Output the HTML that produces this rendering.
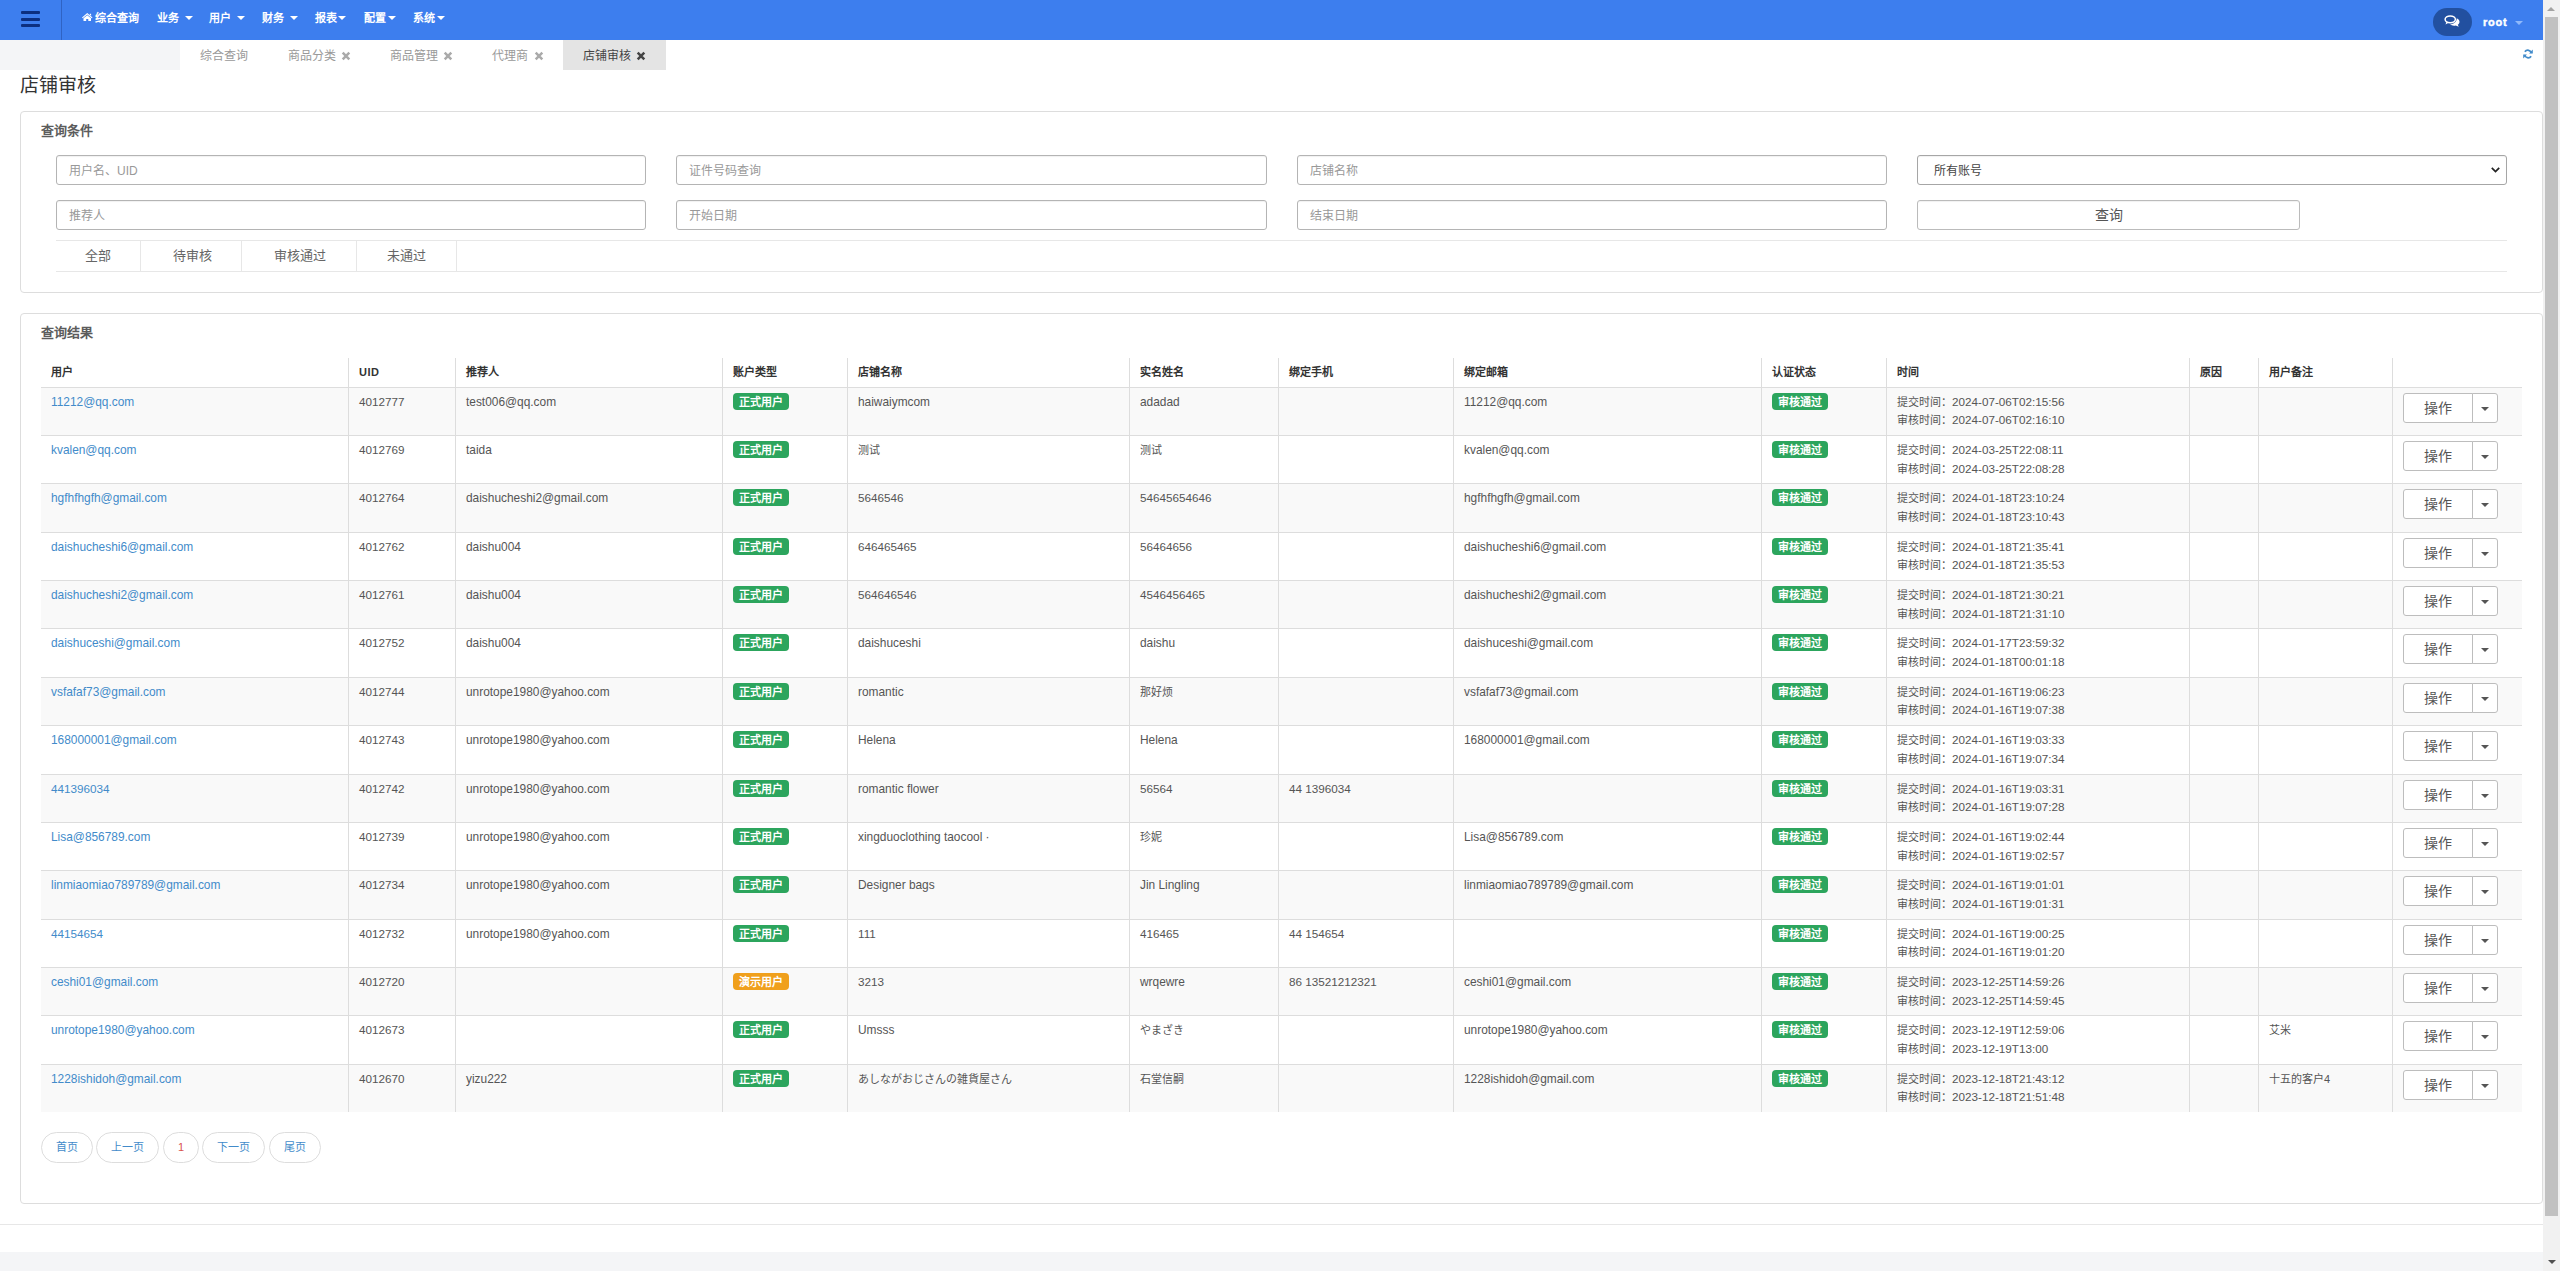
<!DOCTYPE html>
<html lang="zh-CN"><head><meta charset="utf-8"><title>店铺审核</title>
<style>
*{box-sizing:border-box}
html,body{margin:0;padding:0}
body{width:2560px;height:1271px;overflow:hidden;position:relative;background:#fff;font-family:"Liberation Sans",sans-serif;font-size:12px;color:#555;line-height:18px}
.abs{position:absolute}
a{color:#428bca;text-decoration:none}
#nav{left:0;top:0;width:2543px;height:40px;background:#3d7eee}
#nav .it{position:absolute;top:0;height:40px;line-height:36px;color:#fff;font-weight:bold;font-size:11px;white-space:nowrap}
.caret{display:inline-block;width:0;height:0;border-left:4px solid transparent;border-right:4px solid transparent;border-top:4px solid #fff;vertical-align:middle}
#tabs{left:0;top:40px;width:2543px;height:30px;background:#fff}
#tabs .lg{position:absolute;left:0;top:0;width:180px;height:30px;background:#f4f5f7}
#tabs .tb{position:absolute;top:0;height:30px;line-height:33px;font-size:12px;color:#999;white-space:nowrap;padding-left:20px}
#tabs .tb.on{background:#e4e4e4;color:#444}
#tabs .tb .x{color:#aaa}
#tabs .tb.on .x{color:#444}
.x{position:absolute;top:11px;width:10px;height:10px}
h1{position:absolute;left:20px;top:71px;margin:0;font-size:19px;font-weight:normal;color:#333;line-height:30px;white-space:nowrap}
.panel{position:absolute;left:20px;width:2523px;border:1px solid #ddd;border-radius:4px;background:#fff}
.ptitle{position:absolute;left:41px;font-size:13px;font-weight:bold;color:#5c5c5c;line-height:18px;white-space:nowrap}
.inp{position:absolute;height:30px;border:1px solid #b4b4b4;border-radius:3px;box-shadow:inset 0 1px 1px rgba(0,0,0,.06);background:#fff;color:#999;font-size:12px;line-height:30px;padding-left:12px;white-space:nowrap}
.ft{position:absolute;top:241px;height:30px;line-height:29px;font-size:13px;color:#666;text-align:center;border-right:1px solid #e7e7e7;white-space:nowrap}
.th{position:absolute;top:358px;height:29px;line-height:28px;font-size:11px;font-weight:bold;color:#333;padding-left:10px;white-space:nowrap}
.vs{position:absolute;top:358px;width:1px;height:754px;background:#ddd}
.row{position:absolute;left:41px;width:2481px;border-top:1px solid #ddd}
.row.odd{background:#f9f9f9}
.c{position:absolute;top:5px;line-height:18.4px;font-size:11.9px;color:#555;white-space:nowrap}
a.c{color:#428bca}
.c.d{font-size:11.7px}
.c.j,.c .j{font-size:11px}
.tl{display:inline-block;width:55px;overflow:visible;vertical-align:baseline}
.bd{position:absolute;top:5px;height:17px;width:56px;border-radius:4px;color:#fff;font-size:11px;font-weight:bold;line-height:19px;text-align:center;white-space:nowrap;overflow:hidden}
.bd.g{background:#2ca55d}
.bd.o{background:#f0a01c}
.btn{position:absolute;top:5px;height:30px;border:1px solid #bdbdbd;background:#fff;color:#555}
.pg{position:absolute;top:1132px;height:31px;border:1px solid #ddd;border-radius:16px;font-size:11px;line-height:29px;text-align:center;color:#428bca;background:#fff;white-space:nowrap}
</style></head><body>

<div id="nav" class="abs">
<div class="abs" style="left:21px;top:11px;width:19px;height:3px;background:#0c2f80;border-radius:1px"></div>
<div class="abs" style="left:21px;top:17.5px;width:19px;height:3px;background:#0c2f80;border-radius:1px"></div>
<div class="abs" style="left:21px;top:24px;width:19px;height:3px;background:#0c2f80;border-radius:1px"></div>
<div class="abs" style="left:61px;top:0;width:1px;height:40px;background:#2f63c4"></div>
<svg class="abs" style="left:82px;top:12.5px" width="10.5" height="8.6" viewBox="0 0 21 17"><path fill="#fff" d="M10.5 0 L21 9 L19.6 10.6 L10.5 2.9 L1.4 10.6 L0 9 Z M10.5 4.2 L18 10.6 V17 H12.6 V12 H8.4 V17 H3 V10.6 Z M15.6 1.2 H18.2 V5.4 L15.6 3.2 Z"/></svg>
<div class="it" style="left:95px">综合查询</div>
<div class="it" style="left:157px">业务</div>
<div class="abs caret" style="left:185px;top:16px"></div>
<div class="it" style="left:209px">用户</div>
<div class="abs caret" style="left:237px;top:16px"></div>
<div class="it" style="left:262px">财务</div>
<div class="abs caret" style="left:290px;top:16px"></div>
<div class="it" style="left:315px">报表</div>
<div class="abs caret" style="left:338px;top:16px"></div>
<div class="it" style="left:364px">配置</div>
<div class="abs caret" style="left:388px;top:16px"></div>
<div class="it" style="left:413px">系统</div>
<div class="abs caret" style="left:437px;top:16px"></div>
<div class="abs" style="left:2433px;top:8px;width:39px;height:28px;border-radius:14px;background:#2250a0"></div>
<svg class="abs" style="left:2444px;top:15px" width="16" height="12" viewBox="0 0 32 24"><g fill="none" stroke="#fff" stroke-width="3"><ellipse cx="12.5" cy="8.7" rx="10.3" ry="6.9"/></g><path fill="#fff" d="M5 13 L3 19 L10 15 Z"/><path fill="#fff" d="M25.5 6.5 C29 8 31 10.5 31 13.5 C31 16 29.6 18 27.5 19.5 L29.5 23.5 L23.5 21 C19 22 14.5 21 12 18.5 C18 18.5 25.5 15 25.5 6.5 Z"/></svg>
<div class="it" style="left:2483px;font-size:11px;letter-spacing:.75px;-webkit-text-stroke:.45px #fff;line-height:40px;top:1.5px">root</div>
<div class="abs caret" style="left:2515px;top:21px;border-top-color:#8fb9fb"></div>
</div>
<div id="tabs" class="abs"><div class="lg"></div>
<div class="tb" style="left:180px;width:88px">综合查询</div>
<div class="tb" style="left:268px;width:102px">商品分类<svg class="x" style="left:72.6px" viewBox="0 0 10 10"><path d="M1.7 1.7 L8.3 8.3 M8.3 1.7 L1.7 8.3" stroke="currentColor" stroke-width="2.5" fill="none"/></svg></div>
<div class="tb" style="left:370px;width:102px">商品管理<svg class="x" style="left:73px" viewBox="0 0 10 10"><path d="M1.7 1.7 L8.3 8.3 M8.3 1.7 L1.7 8.3" stroke="currentColor" stroke-width="2.5" fill="none"/></svg></div>
<div class="tb" style="left:472px;width:91px">代理商<svg class="x" style="left:61.7px" viewBox="0 0 10 10"><path d="M1.7 1.7 L8.3 8.3 M8.3 1.7 L1.7 8.3" stroke="currentColor" stroke-width="2.5" fill="none"/></svg></div>
<div class="tb on" style="left:563px;width:103px">店铺审核<svg class="x" style="left:73px" viewBox="0 0 10 10"><path d="M1.7 1.7 L8.3 8.3 M8.3 1.7 L1.7 8.3" stroke="currentColor" stroke-width="2.5" fill="none"/></svg></div>
<svg class="abs" style="left:2523px;top:9px" width="10" height="10" viewBox="0 0 20 20"><g fill="none" stroke="#428bca" stroke-width="3.6"><path d="M17 8.2 A7.3 7.3 0 0 0 3.8 5.6"/><path d="M3 11.8 A7.3 7.3 0 0 0 16.2 14.4"/></g><path fill="#428bca" d="M19.6 1.2 V8.8 H12 Z M0.4 18.8 V11.2 H8 Z"/></svg>
</div>
<h1>店铺审核</h1>
<div class="panel" style="top:111px;height:182px"></div>
<div class="ptitle" style="top:122px">查询条件</div>
<div class="inp" style="left:56px;top:155px;width:590px">用户名、UID</div>
<div class="inp" style="left:676px;top:155px;width:591px">证件号码查询</div>
<div class="inp" style="left:1297px;top:155px;width:590px">店铺名称</div>
<div class="inp" style="left:56px;top:200px;width:590px">推荐人</div>
<div class="inp" style="left:676px;top:200px;width:591px">开始日期</div>
<div class="inp" style="left:1297px;top:200px;width:590px">结束日期</div>
<div class="inp" style="left:1917px;top:155px;width:590px;color:#444;padding-left:16px;border-color:#a6a6a6">所有账号<svg class="abs" style="right:6px;top:11px" width="9" height="6" viewBox="0 0 9 6"><path d="M0.8 0.8 L4.5 4.6 L8.2 0.8" fill="none" stroke="#222" stroke-width="1.7"/></svg></div>
<div class="inp" style="left:1917px;top:200px;width:383px;color:#555;font-size:14px;text-align:center;padding-left:0;border-color:#bbb;line-height:29px">查询</div>
<div class="abs" style="left:56px;top:240px;width:2451px;height:1px;background:#e7e7e7"></div>
<div class="abs" style="left:56px;top:271px;width:2451px;height:1px;background:#e7e7e7"></div>
<div class="ft" style="left:56px;width:85px;padding-left:0px">全部</div>
<div class="ft" style="left:140px;width:102px;padding-left:3px">待审核</div>
<div class="ft" style="left:241px;width:116px;padding-left:2px">审核通过</div>
<div class="ft" style="left:356px;width:101px;padding-left:1px">未通过</div>
<div class="panel" style="top:313px;height:891px"></div>
<div class="ptitle" style="top:324px">查询结果</div>
<div class="row odd" style="top:387px;height:48px">
<a class="c" style="left:10px">11212@qq.com</a>
<span class="c d" style="left:318px">4012777</span>
<span class="c" style="left:425px">test006@qq.com</span>
<span class="bd g" style="left:692px">正式用户</span>
<span class="c" style="left:817px">haiwaiymcom</span>
<span class="c" style="left:1099px">adadad</span>
<span class="c" style="left:1423px">11212@qq.com</span>
<span class="bd g" style="left:1731px">审核通过</span>
<span class="c d" style="left:1856px"><span class="j tl">提交时间：</span>2024-07-06T02:15:56</span>
<span class="c d" style="left:1856px;top:23px"><span class="j tl">审核时间：</span>2024-07-06T02:16:10</span>
<span class="btn" style="left:2362px;width:70px;border-radius:3px 0 0 3px;font-size:14px;line-height:28px;text-align:center">操作</span>
<span class="btn" style="left:2431px;width:26px;border-radius:0 3px 3px 0"><i class="caret" style="position:absolute;left:8px;top:13px;border-top-color:#555"></i></span>
</div>
<div class="row" style="top:435px;height:48px">
<a class="c" style="left:10px">kvalen@qq.com</a>
<span class="c d" style="left:318px">4012769</span>
<span class="c" style="left:425px">taida</span>
<span class="bd g" style="left:692px">正式用户</span>
<span class="c j" style="left:817px">测试</span>
<span class="c j" style="left:1099px">测试</span>
<span class="c" style="left:1423px">kvalen@qq.com</span>
<span class="bd g" style="left:1731px">审核通过</span>
<span class="c d" style="left:1856px"><span class="j tl">提交时间：</span>2024-03-25T22:08:11</span>
<span class="c d" style="left:1856px;top:24px"><span class="j tl">审核时间：</span>2024-03-25T22:08:28</span>
<span class="btn" style="left:2362px;width:70px;border-radius:3px 0 0 3px;font-size:14px;line-height:28px;text-align:center">操作</span>
<span class="btn" style="left:2431px;width:26px;border-radius:0 3px 3px 0"><i class="caret" style="position:absolute;left:8px;top:13px;border-top-color:#555"></i></span>
</div>
<div class="row odd" style="top:483px;height:49px">
<a class="c" style="left:10px">hgfhfhgfh@gmail.com</a>
<span class="c d" style="left:318px">4012764</span>
<span class="c" style="left:425px">daishucheshi2@gmail.com</span>
<span class="bd g" style="left:692px">正式用户</span>
<span class="c d" style="left:817px">5646546</span>
<span class="c d" style="left:1099px">54645654646</span>
<span class="c" style="left:1423px">hgfhfhgfh@gmail.com</span>
<span class="bd g" style="left:1731px">审核通过</span>
<span class="c d" style="left:1856px"><span class="j tl">提交时间：</span>2024-01-18T23:10:24</span>
<span class="c d" style="left:1856px;top:24px"><span class="j tl">审核时间：</span>2024-01-18T23:10:43</span>
<span class="btn" style="left:2362px;width:70px;border-radius:3px 0 0 3px;font-size:14px;line-height:28px;text-align:center">操作</span>
<span class="btn" style="left:2431px;width:26px;border-radius:0 3px 3px 0"><i class="caret" style="position:absolute;left:8px;top:13px;border-top-color:#555"></i></span>
</div>
<div class="row" style="top:532px;height:48px">
<a class="c" style="left:10px">daishucheshi6@gmail.com</a>
<span class="c d" style="left:318px">4012762</span>
<span class="c" style="left:425px">daishu004</span>
<span class="bd g" style="left:692px">正式用户</span>
<span class="c d" style="left:817px">646465465</span>
<span class="c d" style="left:1099px">56464656</span>
<span class="c" style="left:1423px">daishucheshi6@gmail.com</span>
<span class="bd g" style="left:1731px">审核通过</span>
<span class="c d" style="left:1856px"><span class="j tl">提交时间：</span>2024-01-18T21:35:41</span>
<span class="c d" style="left:1856px;top:23px"><span class="j tl">审核时间：</span>2024-01-18T21:35:53</span>
<span class="btn" style="left:2362px;width:70px;border-radius:3px 0 0 3px;font-size:14px;line-height:28px;text-align:center">操作</span>
<span class="btn" style="left:2431px;width:26px;border-radius:0 3px 3px 0"><i class="caret" style="position:absolute;left:8px;top:13px;border-top-color:#555"></i></span>
</div>
<div class="row odd" style="top:580px;height:48px">
<a class="c" style="left:10px">daishucheshi2@gmail.com</a>
<span class="c d" style="left:318px">4012761</span>
<span class="c" style="left:425px">daishu004</span>
<span class="bd g" style="left:692px">正式用户</span>
<span class="c d" style="left:817px">564646546</span>
<span class="c d" style="left:1099px">4546456465</span>
<span class="c" style="left:1423px">daishucheshi2@gmail.com</span>
<span class="bd g" style="left:1731px">审核通过</span>
<span class="c d" style="left:1856px"><span class="j tl">提交时间：</span>2024-01-18T21:30:21</span>
<span class="c d" style="left:1856px;top:24px"><span class="j tl">审核时间：</span>2024-01-18T21:31:10</span>
<span class="btn" style="left:2362px;width:70px;border-radius:3px 0 0 3px;font-size:14px;line-height:28px;text-align:center">操作</span>
<span class="btn" style="left:2431px;width:26px;border-radius:0 3px 3px 0"><i class="caret" style="position:absolute;left:8px;top:13px;border-top-color:#555"></i></span>
</div>
<div class="row" style="top:628px;height:49px">
<a class="c" style="left:10px">daishuceshi@gmail.com</a>
<span class="c d" style="left:318px">4012752</span>
<span class="c" style="left:425px">daishu004</span>
<span class="bd g" style="left:692px">正式用户</span>
<span class="c" style="left:817px">daishuceshi</span>
<span class="c" style="left:1099px">daishu</span>
<span class="c" style="left:1423px">daishuceshi@gmail.com</span>
<span class="bd g" style="left:1731px">审核通过</span>
<span class="c d" style="left:1856px"><span class="j tl">提交时间：</span>2024-01-17T23:59:32</span>
<span class="c d" style="left:1856px;top:24px"><span class="j tl">审核时间：</span>2024-01-18T00:01:18</span>
<span class="btn" style="left:2362px;width:70px;border-radius:3px 0 0 3px;font-size:14px;line-height:28px;text-align:center">操作</span>
<span class="btn" style="left:2431px;width:26px;border-radius:0 3px 3px 0"><i class="caret" style="position:absolute;left:8px;top:13px;border-top-color:#555"></i></span>
</div>
<div class="row odd" style="top:677px;height:48px">
<a class="c" style="left:10px">vsfafaf73@gmail.com</a>
<span class="c d" style="left:318px">4012744</span>
<span class="c" style="left:425px">unrotope1980@yahoo.com</span>
<span class="bd g" style="left:692px">正式用户</span>
<span class="c" style="left:817px">romantic</span>
<span class="c j" style="left:1099px">那好烦</span>
<span class="c" style="left:1423px">vsfafaf73@gmail.com</span>
<span class="bd g" style="left:1731px">审核通过</span>
<span class="c d" style="left:1856px"><span class="j tl">提交时间：</span>2024-01-16T19:06:23</span>
<span class="c d" style="left:1856px;top:23px"><span class="j tl">审核时间：</span>2024-01-16T19:07:38</span>
<span class="btn" style="left:2362px;width:70px;border-radius:3px 0 0 3px;font-size:14px;line-height:28px;text-align:center">操作</span>
<span class="btn" style="left:2431px;width:26px;border-radius:0 3px 3px 0"><i class="caret" style="position:absolute;left:8px;top:13px;border-top-color:#555"></i></span>
</div>
<div class="row" style="top:725px;height:49px">
<a class="c" style="left:10px">168000001@gmail.com</a>
<span class="c d" style="left:318px">4012743</span>
<span class="c" style="left:425px">unrotope1980@yahoo.com</span>
<span class="bd g" style="left:692px">正式用户</span>
<span class="c" style="left:817px">Helena</span>
<span class="c" style="left:1099px">Helena</span>
<span class="c" style="left:1423px">168000001@gmail.com</span>
<span class="bd g" style="left:1731px">审核通过</span>
<span class="c d" style="left:1856px"><span class="j tl">提交时间：</span>2024-01-16T19:03:33</span>
<span class="c d" style="left:1856px;top:24px"><span class="j tl">审核时间：</span>2024-01-16T19:07:34</span>
<span class="btn" style="left:2362px;width:70px;border-radius:3px 0 0 3px;font-size:14px;line-height:28px;text-align:center">操作</span>
<span class="btn" style="left:2431px;width:26px;border-radius:0 3px 3px 0"><i class="caret" style="position:absolute;left:8px;top:13px;border-top-color:#555"></i></span>
</div>
<div class="row odd" style="top:774px;height:48px">
<a class="c d" style="left:10px">441396034</a>
<span class="c d" style="left:318px">4012742</span>
<span class="c" style="left:425px">unrotope1980@yahoo.com</span>
<span class="bd g" style="left:692px">正式用户</span>
<span class="c" style="left:817px">romantic flower</span>
<span class="c d" style="left:1099px">56564</span>
<span class="c d" style="left:1248px">44 1396034</span>
<span class="bd g" style="left:1731px">审核通过</span>
<span class="c d" style="left:1856px"><span class="j tl">提交时间：</span>2024-01-16T19:03:31</span>
<span class="c d" style="left:1856px;top:23px"><span class="j tl">审核时间：</span>2024-01-16T19:07:28</span>
<span class="btn" style="left:2362px;width:70px;border-radius:3px 0 0 3px;font-size:14px;line-height:28px;text-align:center">操作</span>
<span class="btn" style="left:2431px;width:26px;border-radius:0 3px 3px 0"><i class="caret" style="position:absolute;left:8px;top:13px;border-top-color:#555"></i></span>
</div>
<div class="row" style="top:822px;height:48px">
<a class="c" style="left:10px">Lisa@856789.com</a>
<span class="c d" style="left:318px">4012739</span>
<span class="c" style="left:425px">unrotope1980@yahoo.com</span>
<span class="bd g" style="left:692px">正式用户</span>
<span class="c" style="left:817px">xingduoclothing taocool ·</span>
<span class="c j" style="left:1099px">珍妮</span>
<span class="c" style="left:1423px">Lisa@856789.com</span>
<span class="bd g" style="left:1731px">审核通过</span>
<span class="c d" style="left:1856px"><span class="j tl">提交时间：</span>2024-01-16T19:02:44</span>
<span class="c d" style="left:1856px;top:24px"><span class="j tl">审核时间：</span>2024-01-16T19:02:57</span>
<span class="btn" style="left:2362px;width:70px;border-radius:3px 0 0 3px;font-size:14px;line-height:28px;text-align:center">操作</span>
<span class="btn" style="left:2431px;width:26px;border-radius:0 3px 3px 0"><i class="caret" style="position:absolute;left:8px;top:13px;border-top-color:#555"></i></span>
</div>
<div class="row odd" style="top:870px;height:49px">
<a class="c" style="left:10px">linmiaomiao789789@gmail.com</a>
<span class="c d" style="left:318px">4012734</span>
<span class="c" style="left:425px">unrotope1980@yahoo.com</span>
<span class="bd g" style="left:692px">正式用户</span>
<span class="c" style="left:817px">Designer bags</span>
<span class="c" style="left:1099px">Jin Lingling</span>
<span class="c" style="left:1423px">linmiaomiao789789@gmail.com</span>
<span class="bd g" style="left:1731px">审核通过</span>
<span class="c d" style="left:1856px"><span class="j tl">提交时间：</span>2024-01-16T19:01:01</span>
<span class="c d" style="left:1856px;top:24px"><span class="j tl">审核时间：</span>2024-01-16T19:01:31</span>
<span class="btn" style="left:2362px;width:70px;border-radius:3px 0 0 3px;font-size:14px;line-height:28px;text-align:center">操作</span>
<span class="btn" style="left:2431px;width:26px;border-radius:0 3px 3px 0"><i class="caret" style="position:absolute;left:8px;top:13px;border-top-color:#555"></i></span>
</div>
<div class="row" style="top:919px;height:48px">
<a class="c d" style="left:10px">44154654</a>
<span class="c d" style="left:318px">4012732</span>
<span class="c" style="left:425px">unrotope1980@yahoo.com</span>
<span class="bd g" style="left:692px">正式用户</span>
<span class="c d" style="left:817px">111</span>
<span class="c d" style="left:1099px">416465</span>
<span class="c d" style="left:1248px">44 154654</span>
<span class="bd g" style="left:1731px">审核通过</span>
<span class="c d" style="left:1856px"><span class="j tl">提交时间：</span>2024-01-16T19:00:25</span>
<span class="c d" style="left:1856px;top:23px"><span class="j tl">审核时间：</span>2024-01-16T19:01:20</span>
<span class="btn" style="left:2362px;width:70px;border-radius:3px 0 0 3px;font-size:14px;line-height:28px;text-align:center">操作</span>
<span class="btn" style="left:2431px;width:26px;border-radius:0 3px 3px 0"><i class="caret" style="position:absolute;left:8px;top:13px;border-top-color:#555"></i></span>
</div>
<div class="row odd" style="top:967px;height:48px">
<a class="c" style="left:10px">ceshi01@gmail.com</a>
<span class="c d" style="left:318px">4012720</span>
<span class="bd o" style="left:692px">演示用户</span>
<span class="c d" style="left:817px">3213</span>
<span class="c" style="left:1099px">wrqewre</span>
<span class="c d" style="left:1248px">86 13521212321</span>
<span class="c" style="left:1423px">ceshi01@gmail.com</span>
<span class="bd g" style="left:1731px">审核通过</span>
<span class="c d" style="left:1856px"><span class="j tl">提交时间：</span>2023-12-25T14:59:26</span>
<span class="c d" style="left:1856px;top:24px"><span class="j tl">审核时间：</span>2023-12-25T14:59:45</span>
<span class="btn" style="left:2362px;width:70px;border-radius:3px 0 0 3px;font-size:14px;line-height:28px;text-align:center">操作</span>
<span class="btn" style="left:2431px;width:26px;border-radius:0 3px 3px 0"><i class="caret" style="position:absolute;left:8px;top:13px;border-top-color:#555"></i></span>
</div>
<div class="row" style="top:1015px;height:49px">
<a class="c" style="left:10px">unrotope1980@yahoo.com</a>
<span class="c d" style="left:318px">4012673</span>
<span class="bd g" style="left:692px">正式用户</span>
<span class="c" style="left:817px">Umsss</span>
<span class="c j" style="left:1099px">やまざき</span>
<span class="c" style="left:1423px">unrotope1980@yahoo.com</span>
<span class="bd g" style="left:1731px">审核通过</span>
<span class="c d" style="left:1856px"><span class="j tl">提交时间：</span>2023-12-19T12:59:06</span>
<span class="c d" style="left:1856px;top:24px"><span class="j tl">审核时间：</span>2023-12-19T13:00</span>
<span class="c j" style="left:2228px">艾米</span>
<span class="btn" style="left:2362px;width:70px;border-radius:3px 0 0 3px;font-size:14px;line-height:28px;text-align:center">操作</span>
<span class="btn" style="left:2431px;width:26px;border-radius:0 3px 3px 0"><i class="caret" style="position:absolute;left:8px;top:13px;border-top-color:#555"></i></span>
</div>
<div class="row odd" style="top:1064px;height:48px">
<a class="c" style="left:10px">1228ishidoh@gmail.com</a>
<span class="c d" style="left:318px">4012670</span>
<span class="c" style="left:425px">yizu222</span>
<span class="bd g" style="left:692px">正式用户</span>
<span class="c j" style="left:817px">あしながおじさんの雑貨屋さん</span>
<span class="c j" style="left:1099px">石堂信嗣</span>
<span class="c" style="left:1423px">1228ishidoh@gmail.com</span>
<span class="bd g" style="left:1731px">审核通过</span>
<span class="c d" style="left:1856px"><span class="j tl">提交时间：</span>2023-12-18T21:43:12</span>
<span class="c d" style="left:1856px;top:23px"><span class="j tl">审核时间：</span>2023-12-18T21:51:48</span>
<span class="c j" style="left:2228px">十五的客户4</span>
<span class="btn" style="left:2362px;width:70px;border-radius:3px 0 0 3px;font-size:14px;line-height:28px;text-align:center">操作</span>
<span class="btn" style="left:2431px;width:26px;border-radius:0 3px 3px 0"><i class="caret" style="position:absolute;left:8px;top:13px;border-top-color:#555"></i></span>
</div>
<div class="th" style="left:41px">用户</div>
<div class="th" style="left:349px;letter-spacing:.5px">UID</div>
<div class="th" style="left:456px">推荐人</div>
<div class="th" style="left:723px">账户类型</div>
<div class="th" style="left:848px">店铺名称</div>
<div class="th" style="left:1130px">实名姓名</div>
<div class="th" style="left:1279px">绑定手机</div>
<div class="th" style="left:1454px">绑定邮箱</div>
<div class="th" style="left:1762px">认证状态</div>
<div class="th" style="left:1887px">时间</div>
<div class="th" style="left:2190px">原因</div>
<div class="th" style="left:2259px">用户备注</div>
<div class="vs" style="left:348px"></div>
<div class="vs" style="left:455px"></div>
<div class="vs" style="left:722px"></div>
<div class="vs" style="left:847px"></div>
<div class="vs" style="left:1129px"></div>
<div class="vs" style="left:1278px"></div>
<div class="vs" style="left:1453px"></div>
<div class="vs" style="left:1761px"></div>
<div class="vs" style="left:1886px"></div>
<div class="vs" style="left:2189px"></div>
<div class="vs" style="left:2258px"></div>
<div class="vs" style="left:2392px"></div>
<div class="pg" style="left:41px;width:52px">首页</div>
<div class="pg" style="left:96px;width:63px">上一页</div>
<div class="pg" style="left:163px;width:36px;color:#d9534f">1</div>
<div class="pg" style="left:202px;width:63px">下一页</div>
<div class="pg" style="left:269px;width:52px">尾页</div>
<div class="abs" style="left:0;top:1224px;width:2543px;height:1px;background:#e7e7e7"></div>
<div class="abs" style="left:0;top:1252px;width:2543px;height:19px;background:#f4f5f7"></div>
<div class="abs" style="left:2543px;top:0;width:17px;height:1271px;background:#f1f1f1"></div>
<div class="abs" style="left:2545px;top:17px;width:13px;height:1199px;background:#c1c1c1"></div>
<div class="abs" style="left:2547px;top:7px;width:0;height:0;border-left:4.5px solid transparent;border-right:4.5px solid transparent;border-bottom:4.5px solid #a3a3a3"></div>
<div class="abs" style="left:2547.5px;top:1260px;width:0;height:0;border-left:4.5px solid transparent;border-right:4.5px solid transparent;border-top:4.5px solid #505050"></div>
</body></html>
